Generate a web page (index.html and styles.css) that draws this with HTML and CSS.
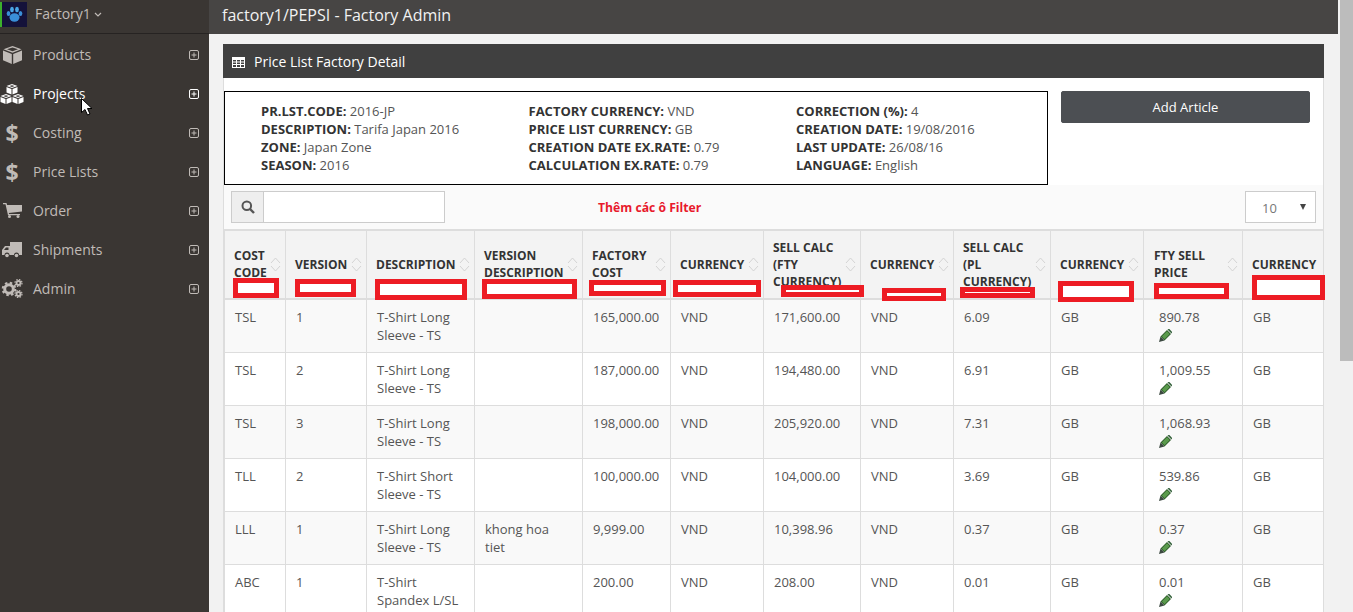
FILE: index.html
```html
<!DOCTYPE html>
<html lang="en">
<head>
    <meta charset="UTF-8">
    <meta name="viewport" content="width=device-width, initial-scale=1.0">
    <title>factory1/PEPSI - Factory Admin</title>
    <link rel="stylesheet" href="styles.css">
</head>
<body>

<svg class="defs" width="0" height="0">
    <symbol id="plus" viewBox="0 0 10 10">
        <rect x="0.5" y="0.5" width="9" height="9" rx="1.500" fill="none" stroke="currentColor"/>
        <path d="M5 2.500v5M2.500 5h5" stroke="currentColor" fill="none"/>
    </symbol>
    <symbol id="sort" viewBox="0 0 11 15">
        <path d="M1 6l4.500-5L10 6M1 9l4.500 5L10 9" fill="none" stroke="#d4d4d4"/>
    </symbol>
    <symbol id="pencil" viewBox="0 0 13 13">
        <path d="M1.500 7.500L8 1l4 4-6.500 6.500z" fill="#2f5d2a"/>
        <path d="M2.800 7.500L8 2.300l2.700 2.700-5.200 5.200z" fill="#5a9a4c"/>
        <path d="M8.500 0.500l1-0.500c0.400-0.100 0.800 0 1.100 0.300l2.100 2.100c0.300 0.300 0.400 0.700 0.300 1.100l-0.500 1z" fill="#33603a"/>
        <path d="M1.500 7.500l4 4L0 13z" fill="#3d4a42"/>
    </symbol>
</svg>

<div class="sidebar">
    <div class="brand">
        <span class="brand-bar"></span>
        <svg class="brand-logo" viewBox="0 0 25 25">
            <rect width="25" height="25" fill="#14123a"/>
            <ellipse cx="12.500" cy="15.500" rx="5" ry="4.200" fill="#3a8fd8"/>
            <ellipse cx="6.500" cy="11.500" rx="1.800" ry="2.500" fill="#3a8fd8"/>
            <ellipse cx="10" cy="7.500" rx="1.900" ry="2.700" fill="#4aa6e6"/>
            <ellipse cx="15" cy="7.500" rx="1.900" ry="2.700" fill="#4aa6e6"/>
            <ellipse cx="18.500" cy="11.500" rx="1.800" ry="2.500" fill="#3a8fd8"/>
        </svg>
        <span class="brand-name">Factory1</span>
        <svg class="brand-caret" viewBox="0 0 8 5"><path d="M1 1l3 3 3-3" fill="none" stroke="currentColor" stroke-width="1.200"/></svg>
    </div>
    <ul class="nav">
        <li class="nav-item">
            <span class="nav-icon">
                <svg width="19" height="18" viewBox="0 0 19 18"><path d="M9.500 0L18.500 3.200 9.500 6.800 0.500 3.200zM9.500 1.400L4 3.300 9.500 5.300 15 3.300z" fill="currentColor" fill-rule="evenodd"/><path d="M0 4.500L8.800 8V18L0 14.200zM19 4.500L10.200 8V18L19 14.200z" fill="currentColor"/></svg>
            </span>
            Products
            <svg class="nav-plus"><use href="#plus"/></svg>
        </li>
        <li class="nav-item active">
            <span class="nav-icon">
                <svg width="24" height="20" viewBox="0 0 24 20"><path d="M12 0l5.500 2L12 4 6.500 2zM12 1.200L9.300 2 12 2.900 14.700 2z" fill="currentColor" fill-rule="evenodd"/><path d="M6.500 3l5 2v5.500l-5-2zM17.500 3l-5 2v5.500l5-2z" fill="currentColor"/><path d="M6 10l5.500 2L6 14 0.500 12zM6 11.200L3.300 12 6 12.900 8.700 12z" fill="currentColor" fill-rule="evenodd"/><path d="M0.500 13l5 2v5l-5-2zM11.500 13l-5 2v5l5-2z" fill="currentColor"/><path d="M18 10l5.500 2L18 14 12.500 12zM18 11.200L15.300 12 18 12.900 20.700 12z" fill="currentColor" fill-rule="evenodd"/><path d="M12.500 13l5 2v5l-5-2zM23.500 13l-5 2v5l5-2z" fill="currentColor"/></svg>
            </span>
            Projects
            <svg class="nav-plus"><use href="#plus"/></svg>
        </li>
        <li class="nav-item">
            <span class="nav-icon dollar">$</span>
            Costing
            <svg class="nav-plus"><use href="#plus"/></svg>
        </li>
        <li class="nav-item">
            <span class="nav-icon dollar">$</span>
            Price Lists
            <svg class="nav-plus"><use href="#plus"/></svg>
        </li>
        <li class="nav-item">
            <span class="nav-icon">
                <svg width="19" height="15" viewBox="0 0 19 15"><path d="M0 0h3.500l0.600 2H19v6.500L5.800 10l0.300 1H17v1.300H5L2.500 1.300H0z" fill="currentColor"/><circle cx="6.500" cy="13.500" r="1.500" fill="currentColor"/><circle cx="15" cy="13.500" r="1.500" fill="currentColor"/></svg>
            </span>
            Order
            <svg class="nav-plus"><use href="#plus"/></svg>
        </li>
        <li class="nav-item">
            <span class="nav-icon">
                <svg width="20" height="16" viewBox="0 0 20 16"><path d="M8 0h12v13h-3a2.500 2.500 0 0 0-5 0H7.500a2.500 2.500 0 0 0-5 0H0V8l3-4h5zM2 8h4.500V5.500H4z" fill="currentColor" fill-rule="evenodd"/><circle cx="5" cy="13.500" r="1.800" fill="currentColor"/><circle cx="14.500" cy="13.500" r="1.800" fill="currentColor"/></svg>
            </span>
            Shipments
            <svg class="nav-plus"><use href="#plus"/></svg>
        </li>
        <li class="nav-item">
            <span class="nav-icon">
                <svg width="22" height="19" viewBox="0 0 22 19">
                    <circle cx="8" cy="10" r="4.300" fill="none" stroke="currentColor" stroke-width="3"/>
                    <circle cx="8" cy="10" r="6.300" fill="none" stroke="currentColor" stroke-width="2" stroke-dasharray="2.500 2.450"/>
                    <circle cx="17.500" cy="4" r="2" fill="none" stroke="currentColor" stroke-width="1.800"/>
                    <circle cx="17.500" cy="4" r="3.500" fill="none" stroke="currentColor" stroke-width="1.200" stroke-dasharray="1.500 1.250"/>
                    <circle cx="17.500" cy="15" r="2" fill="none" stroke="currentColor" stroke-width="1.800"/>
                    <circle cx="17.500" cy="15" r="3.500" fill="none" stroke="currentColor" stroke-width="1.200" stroke-dasharray="1.500 1.250"/>
                </svg>
            </span>
            Admin
            <svg class="nav-plus"><use href="#plus"/></svg>
        </li>
    </ul>
    <svg class="cursor" width="13" height="18" viewBox="0 0 13 18"><path d="M0.500 0.500V14.500L4 11.500 6.500 17 9 16 6.500 10.500H11z" fill="#fff" stroke="#000"/></svg>
</div>

<div class="main">
    <div class="topbar">factory1/PEPSI - Factory Admin</div>

    <div class="panel">
        <div class="panel-head">
            <svg width="13" height="11" viewBox="0 0 13 11"><path d="M0 0h13v11H0zM1 3v1.500h3V3zM5 3v1.500h3V3zM9 3v1.500h3V3zM1 5.500V7h3V5.500zM5 5.500V7h3V5.500zM9 5.500V7h3V5.500zM1 8v2h3V8zM5 8v2h3V8zM9 8v2h3V8z" fill="#fff" fill-rule="evenodd"/></svg>
            <span>Price List Factory Detail</span>
        </div>

        <div class="summary">
            <div class="info">
                <div class="info-col">
                    <div><b>PR.LST.CODE:</b> 2016-JP</div>
                    <div><b>DESCRIPTION:</b> Tarifa Japan 2016</div>
                    <div><b>ZONE:</b> Japan Zone</div>
                    <div><b>SEASON:</b> 2016</div>
                </div>
                <div class="info-col">
                    <div><b>FACTORY CURRENCY:</b> VND</div>
                    <div><b>PRICE LIST CURRENCY:</b> GB</div>
                    <div><b>CREATION DATE EX.RATE:</b> 0.79</div>
                    <div><b>CALCULATION EX.RATE:</b> 0.79</div>
                </div>
                <div class="info-col">
                    <div><b>CORRECTION (%):</b> 4</div>
                    <div><b>CREATION DATE:</b> 19/08/2016</div>
                    <div><b>LAST UPDATE:</b> 26/08/16</div>
                    <div><b>LANGUAGE:</b> English</div>
                </div>
            </div>
            <div class="actions">
                <button class="add-btn">Add Article</button>
            </div>
        </div>

        <div class="toolbar">
            <div class="search">
                <span class="search-icon">
                    <svg width="14" height="14" viewBox="0 0 14 14"><circle cx="5.800" cy="5.800" r="4.300" fill="none" stroke="#555" stroke-width="2"/><path d="M9 9l4 4" stroke="#555" stroke-width="2.400"/></svg>
                </span>
                <input class="search-input" type="text">
            </div>
            <span class="filter-note">Thêm các ô Filter</span>
            <div class="page-size">
                <span>10</span>
                <i class="page-arrow"></i>
            </div>
        </div>

        <div class="table-wrap">
            <table class="grid">
                <colgroup>
                    <col class="c1"><col class="c2"><col class="c3"><col class="c4">
                    <col class="c5"><col class="c6"><col class="c7"><col class="c6">
                    <col class="c7"><col class="c6"><col class="c8"><col class="c9">
                </colgroup>
                <thead>
                    <tr>
                        <th><div class="th-in"><span>COST CODE</span><svg class="sort"><use href="#sort"/></svg></div></th>
                        <th><div class="th-in"><span>VERSION</span><svg class="sort"><use href="#sort"/></svg></div></th>
                        <th><div class="th-in"><span>DESCRIPTION</span><svg class="sort"><use href="#sort"/></svg></div></th>
                        <th><div class="th-in"><span>VERSION DESCRIPTION</span><svg class="sort"><use href="#sort"/></svg></div></th>
                        <th><div class="th-in"><span>FACTORY COST</span><svg class="sort"><use href="#sort"/></svg></div></th>
                        <th><div class="th-in"><span>CURRENCY</span><svg class="sort"><use href="#sort"/></svg></div></th>
                        <th><div class="th-in"><span>SELL CALC (FTY CURRENCY)</span><svg class="sort"><use href="#sort"/></svg></div></th>
                        <th><div class="th-in"><span>CURRENCY</span><svg class="sort"><use href="#sort"/></svg></div></th>
                        <th><div class="th-in"><span>SELL CALC (PL CURRENCY)</span><svg class="sort"><use href="#sort"/></svg></div></th>
                        <th><div class="th-in"><span>CURRENCY</span><svg class="sort"><use href="#sort"/></svg></div></th>
                        <th class="fty"><div class="th-in"><span>FTY SELL PRICE</span><svg class="sort"><use href="#sort"/></svg></div></th>
                        <th><div class="th-in"><span>CURRENCY</span><svg class="sort"><use href="#sort"/></svg></div></th>
                    </tr>
                </thead>
                <tbody>
                    <tr>
                        <td>TSL</td><td>1</td><td>T-Shirt Long Sleeve - TS</td><td></td><td>165,000.00</td><td>VND</td><td>171,600.00</td><td>VND</td><td>6.09</td><td>GB</td>
                        <td class="price">890.78<svg class="edit"><use href="#pencil"/></svg></td><td>GB</td>
                    </tr>
                    <tr>
                        <td>TSL</td><td>2</td><td>T-Shirt Long Sleeve - TS</td><td></td><td>187,000.00</td><td>VND</td><td>194,480.00</td><td>VND</td><td>6.91</td><td>GB</td>
                        <td class="price">1,009.55<svg class="edit"><use href="#pencil"/></svg></td><td>GB</td>
                    </tr>
                    <tr>
                        <td>TSL</td><td>3</td><td>T-Shirt Long Sleeve - TS</td><td></td><td>198,000.00</td><td>VND</td><td>205,920.00</td><td>VND</td><td>7.31</td><td>GB</td>
                        <td class="price">1,068.93<svg class="edit"><use href="#pencil"/></svg></td><td>GB</td>
                    </tr>
                    <tr>
                        <td>TLL</td><td>2</td><td>T-Shirt Short Sleeve - TS</td><td></td><td>100,000.00</td><td>VND</td><td>104,000.00</td><td>VND</td><td>3.69</td><td>GB</td>
                        <td class="price">539.86<svg class="edit"><use href="#pencil"/></svg></td><td>GB</td>
                    </tr>
                    <tr>
                        <td>LLL</td><td>1</td><td>T-Shirt Long Sleeve - TS</td><td>khong hoa tiet</td><td>9,999.00</td><td>VND</td><td>10,398.96</td><td>VND</td><td>0.37</td><td>GB</td>
                        <td class="price">0.37<svg class="edit"><use href="#pencil"/></svg></td><td>GB</td>
                    </tr>
                    <tr>
                        <td>ABC</td><td>1</td><td>T-Shirt Spandex L/SL</td><td></td><td>200.00</td><td>VND</td><td>208.00</td><td>VND</td><td>0.01</td><td>GB</td>
                        <td class="price">0.01<svg class="edit"><use href="#pencil"/></svg></td><td>GB</td>
                    </tr>
                </tbody>
            </table>
        </div>

        <!-- red boxes someone drew on the screenshot -->
        <span class="mark m1"></span>
        <span class="mark m2"></span>
        <span class="mark m3"></span>
        <span class="mark m4"></span>
        <span class="mark m5"></span>
        <span class="mark m6"></span>
        <span class="mark m7"></span>
        <span class="mark m8"></span>
        <span class="mark m9"></span>
        <span class="mark m10"></span>
        <span class="mark m11"></span>
        <span class="mark m12"></span>
    </div>
</div>

<div class="scrollbar"><div class="scroll-thumb"></div></div>

</body>
</html>
```

FILE: styles.css
```css
html, body {
    height: 100%;
    overflow: hidden;
}
body {
    margin: 0;
    display: flex;
    font-family: "Open Sans", Arial, sans-serif;
    font-size: 13px;
    line-height: 18px;
    color: #555;
    background-color: #f2f2f2;
}
.defs {
    position: absolute;
}

/* sidebar */
.sidebar {
    position: relative;
    flex: 0 0 209px;
    background-color: #3a3633;
    color: #c0bbb7;
}
.brand {
    height: 33px;
    display: flex;
    align-items: center;
    border-bottom: 1px solid #262322;
    box-sizing: content-box;
}
.brand-bar {
    width: 2px;
    height: 25px;
    margin-bottom: 5px;
    background-color: #3cb02c;
}
.brand-logo {
    width: 25px;
    height: 25px;
    margin-bottom: 5px;
}
.brand-name {
    margin-left: 8px;
    margin-bottom: 5px;
    font-size: 14px;
}
.brand-caret {
    width: 8px;
    height: 5px;
    margin-left: 3px;
    margin-bottom: 4px;
}
.nav {
    list-style: none;
    margin: 0;
    padding: 1px 0 0;
}
.nav-item {
    height: 39px;
    display: flex;
    align-items: center;
    font-size: 14px;
}
.nav-item.active {
    color: #fff;
}
.nav-icon {
    flex: 0 0 33px;
    box-sizing: border-box;
    padding-right: 9px;
    display: flex;
    justify-content: center;
    align-items: center;
}
.dollar {
    font-size: 23px;
    font-weight: 700;
}
.nav-plus {
    width: 10px;
    height: 10px;
    margin-left: auto;
    margin-right: 10px;
}
.cursor {
    position: absolute;
    left: 81px;
    top: 98px;
}

/* main area */
.main {
    flex: 1;
    min-width: 0;
}
.topbar {
    height: 34px;
    margin-right: 2px;
    padding-left: 13px;
    background-color: #474544;
    color: #f2f2f2;
    font-size: 16px;
    line-height: 31px;
}
.panel {
    position: relative;
    margin: 10px 16px 0 14px;
    border: 1px solid #ddd;
    border-top: 0;
    background-color: #fff;
}
.panel-head {
    height: 34px;
    margin: 0 -1px;
    padding: 2px 0 0 9px;
    box-sizing: border-box;
    display: flex;
    align-items: center;
    gap: 9px;
    background-color: #404040;
    color: #fff;
    font-size: 14px;
}
.summary {
    display: flex;
    padding-top: 13px;
    background-color: #fff;
}
.info {
    width: 824px;
    box-sizing: border-box;
    padding: 10px 0;
    display: flex;
    border: 1px solid #000;
}
.info-col {
    flex: 0 0 267.500px;
    padding-left: 36px;
    box-sizing: border-box;
}
.info-col b {
    color: #333;
}
.actions {
    flex: 1;
    padding: 0 13px;
}
.add-btn {
    width: 100%;
    height: 32px;
    border: 1px solid #4c4f53;
    border-radius: 2px;
    background-color: #4c4f53;
    color: #fff;
    font-family: inherit;
    font-size: 13px;
}
.toolbar {
    height: 46px;
    padding: 6px 7px 0;
    box-sizing: border-box;
    display: flex;
    align-items: flex-start;
    background-color: #fafafa;
    border-bottom: 2px solid #ddd;
}
.search {
    width: 214px;
    height: 32px;
    display: flex;
    box-sizing: border-box;
    border: 1px solid #ccc;
}
.search-icon {
    flex: 0 0 31px;
    display: flex;
    justify-content: center;
    align-items: center;
    background-color: #eee;
    border-right: 1px solid #ccc;
}
.search-input {
    flex: 1;
    min-width: 0;
    border: 0;
    padding: 0 8px;
    background-color: #fff;
}
.filter-note {
    margin-left: 153px;
    margin-top: 8px;
    color: #e8192c;
    font-size: 12.200px;
    font-weight: 700;
}
.page-size {
    position: relative;
    width: 71px;
    height: 32px;
    margin-left: auto;
    padding-left: 16px;
    box-sizing: border-box;
    border: 1px solid #ccc;
    background-color: #fff;
    line-height: 33px;
    color: #777;
}
.page-arrow {
    position: absolute;
    right: 9px;
    top: 12px;
    border-left: 3px solid transparent;
    border-right: 3px solid transparent;
    border-top: 6px solid #444;
}

/* table */
.table-wrap {
    overflow: hidden;
}
.grid {
    width: 1119px;
    table-layout: fixed;
    border-collapse: separate;
    border-spacing: 0;
    border-left: 1px solid #ddd;
}
.c1 { width: 61px; }
.c2 { width: 81px; }
.c3, .c4 { width: 108px; }
.c5 { width: 88px; }
.c6 { width: 93px; }
.c7 { width: 97px; }
.c8 { width: 99px; }
.c9 { width: 100px; }
.grid th {
    height: 69px;
    padding: 0 4px 1px 9px;
    box-sizing: border-box;
    background-color: #f3f3f3;
    border-right: 1px solid #ddd;
    border-bottom: 2px solid #ddd;
    color: #333;
    font-size: 12px;
    font-weight: 700;
    line-height: 17px;
    text-align: left;
}
.grid th.fty {
    padding-left: 10px;
}
.th-in {
    display: flex;
    align-items: center;
    justify-content: space-between;
}
.sort {
    flex: 0 0 11px;
    width: 11px;
    height: 15px;
}
.grid td {
    padding: 8px 10px;
    vertical-align: top;
    border-right: 1px solid #ddd;
    border-bottom: 1px solid #ddd;
}
.grid td.price {
    padding-left: 15px;
}
.grid tbody tr:nth-child(odd) td {
    background-color: #f9f9f9;
}
.edit {
    display: block;
    width: 13px;
    height: 13px;
    margin: 3px 0 2px;
}

/* annotation boxes */
.mark {
    position: absolute;
    box-sizing: border-box;
    border: 5px solid #ed1c24;
    background-color: #fff;
}
.m1 { left: 9px; top: 234px; width: 46px; height: 20px; }
.m2 { left: 71px; top: 235px; width: 61px; height: 18px; }
.m3 { left: 151px; top: 235px; width: 92px; height: 21px; }
.m4 { left: 258px; top: 235px; width: 95px; height: 20px; }
.m5 { left: 365px; top: 236px; width: 77px; height: 16px; }
.m6 { left: 449px; top: 236px; width: 88px; height: 17px; }
.m7 { left: 557px; top: 241px; width: 83px; height: 12px; }
.m8 { left: 658px; top: 244px; width: 64px; height: 13px; }
.m9 { left: 736px; top: 243px; width: 75px; height: 11px; }
.m10 { left: 834px; top: 237px; width: 76px; height: 21px; }
.m11 { left: 930px; top: 239px; width: 75px; height: 16px; }
.m12 { left: 1028px; top: 231px; width: 73px; height: 25px; }

/* page scrollbar */
.scrollbar {
    flex: 0 0 13px;
    background-color: #f1f1f1;
}
.scroll-thumb {
    height: 361px;
    background-color: #bcbcbc;
}
```
